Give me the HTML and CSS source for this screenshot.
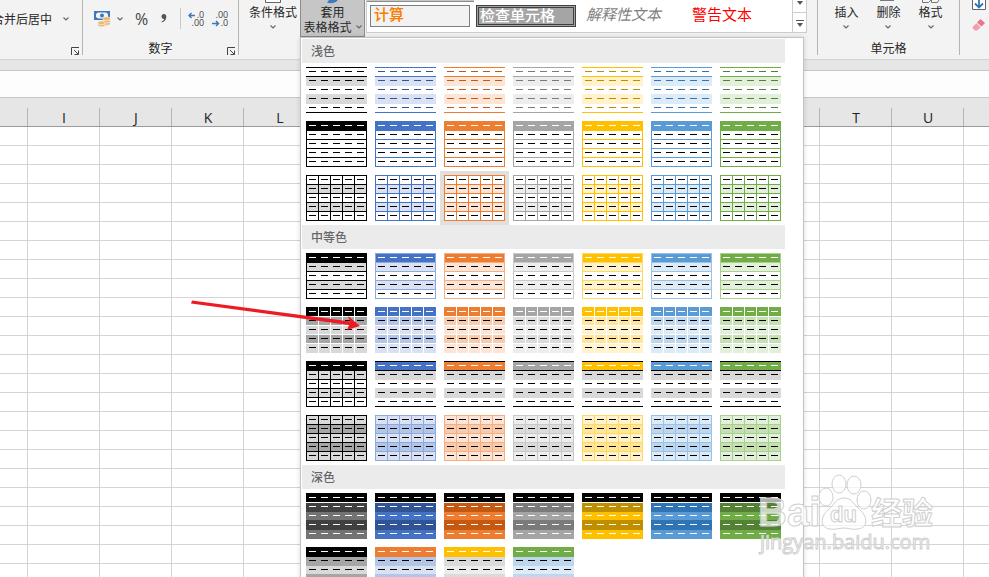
FILE: index.html
```html
<!DOCTYPE html>
<html lang="zh-CN">
<head>
<meta charset="utf-8">
<title>Excel</title>
<link rel="stylesheet" href="styles.css">
</head>
<body>
<svg class="defs" aria-hidden="true">
  <symbol id="chev" viewBox="0 0 6 4"><path d="M.5.5 3 3 5.5.5" fill="none" stroke="#666" stroke-width="1.1"/></symbol>
  <symbol id="launch" viewBox="0 0 8 8"><path d="M.5 8V.5H8M3 3l4 4M7.500 3.500v4h-4" fill="none" stroke="#444"/></symbol>
</svg>
<header class="ribbon">
  <section class="group group-align">
    <div class="tools">
      <button class="tool merge">合并后居中<svg class="chev"><use href="#chev"/></svg></button>
    </div>
    <div class="caption"><button class="launcher" aria-label="对齐设置"><svg><use href="#launch"/></svg></button></div>
  </section>
  <section class="group group-number">
    <div class="tools">
      <button class="tool money" aria-label="会计数字格式">
        <svg width="17" height="17" viewBox="0 0 17 17"><path fill="#3d7ab8" d="M0 1h16v9H0z"/><path fill="#f3f3f3" d="M2 4l2-1.500h8L14 4v3l-2 1.500H4L2 7z"/><circle cx="8" cy="5.500" r="2" fill="#3d7ab8"/><g fill="#eab76c" stroke="#f3f3f3" stroke-width=".7"><ellipse cx="12.500" cy="13.500" rx="3.800" ry="1.900"/><ellipse cx="12.500" cy="11.200" rx="3.800" ry="1.900"/><ellipse cx="12.500" cy="8.700" rx="3.800" ry="1.900"/><ellipse cx="7.500" cy="15" rx="3.800" ry="1.800"/><ellipse cx="7.500" cy="12.800" rx="3.800" ry="1.800"/></g></svg>
        <svg class="chev"><use href="#chev"/></svg>
      </button>
      <button class="tool percent">%</button>
      <button class="tool comma" aria-label="千位分隔样式"><svg width="6" height="9" viewBox="0 0 6 9"><path fill="#555" d="M2.800 0C4.600 0 5.600 1.300 5.300 3.300 5 6 3.200 8 .8 8.600L.5 7.700C2 7 3 6 3.200 5 1.700 5.200.5 4.200.5 2.600.5 1 1.500 0 2.800 0z"/></svg></button>
      <span class="sep"></span>
      <button class="tool decimals" aria-label="增加小数位数"><svg width="16" height="16" viewBox="0 0 16 16"><path d="M1 4.500h6M3.500 2 1 4.500 3.500 7" fill="none" stroke="#3d7ab8" stroke-width="1.500"/></svg><span>.0</span><span>.00</span></button>
      <button class="tool decimals" aria-label="减少小数位数"><svg width="16" height="16" viewBox="0 0 16 16"><path d="M0 12.500h6.500M4 10l2.500 2.500L4 15" fill="none" stroke="#3d7ab8" stroke-width="1.500"/></svg><span>.00</span><span>.0</span></button>
    </div>
    <div class="caption">数字<button class="launcher" aria-label="数字设置"><svg><use href="#launch"/></svg></button></div>
  </section>
  <section class="group group-styles">
    <button class="big conditional"><svg class="top" width="16" height="4" viewBox="0 0 16 4"><path d="M.5 0v2.500h15V0" fill="#fff" stroke="#666"/></svg><span>条件格式</span><svg class="chev"><use href="#chev"/></svg></button>
    <div class="menu-anchor">
      <button class="big format-table" aria-expanded="true"><svg class="top" width="16" height="4" viewBox="0 0 16 4"><path d="M4 0h9C11 3 6 4 2 2.500z" fill="#3d7ab8"/></svg><span>套用</span><span>表格格式<svg class="chev"><use href="#chev"/></svg></span></button>
      <div class="gallery" id="gallery"></div>
    </div>
    <div class="styles">
      <div class="style-list">
        <span class="style-edge"></span>
        <button class="style calc">计算</button>
        <button class="style check">检查单元格</button>
        <button class="style explain">解释性文本</button>
        <button class="style warn">警告文本</button>
      </div>
      <div class="style-scroll">
        <button aria-label="向下滚动"><svg width="6" height="4" viewBox="0 0 6 4"><path d="M0 0h6L3 4z" fill="#555"/></svg></button>
        <button aria-label="其他样式"><svg width="8" height="7" viewBox="0 0 8 7"><path d="M0 0h8v1H0zM1 3h6L4 7z" fill="#555"/></svg></button>
      </div>
    </div>
  </section>
  <section class="group group-cells">
    <div class="tools">
      <button class="big"><svg class="top" width="16" height="4"></svg><span>插入</span><svg class="chev"><use href="#chev"/></svg></button>
      <button class="big"><svg class="top" width="16" height="4" viewBox="0 0 16 4"><path d="M0 0h14v1H0z" fill="#777"/></svg><span>删除</span><svg class="chev"><use href="#chev"/></svg></button>
      <button class="big"><svg class="top" width="18" height="4" viewBox="0 0 18 4"><path d="M.5 0v2.500h6L9 0M9.500 0v2.500h6L17 0" fill="none" stroke="#777"/></svg><span>格式</span><svg class="chev"><use href="#chev"/></svg></button>
    </div>
    <div class="caption">单元格</div>
  </section>
  <section class="group-edit">
    <button aria-label="填充"><svg width="14" height="10" viewBox="0 0 14 10"><path d="M.5 0v9.500h13V0" fill="#fff" stroke="#666"/><path d="M7 0v7M3 3.500 7 7.500l4-4" fill="none" stroke="#2f75b5" stroke-width="1.800"/></svg></button>
    <button aria-label="清除"><svg width="14" height="14" viewBox="0 0 14 14"><path d="M8.500 1 13 5 9.500 8.500 5 4.500z" fill="#e87588"/><path d="M4.400 5.200 8.800 9.200 5 12.500H3L.8 10.300V8.800z" fill="#f0a0ac"/></svg></button>
  </section>
</header>
<div class="formula"><input aria-label="编辑栏"></div>
<main class="sheet">
  <table>
    <thead><tr><th></th><th>I</th><th>J</th><th>K</th><th>L</th><th></th><th></th><th></th><th></th><th></th><th></th><th></th><th>T</th><th>U</th><th></th></tr></thead>
    <tbody id="rows"></tbody>
  </table>
</main>
<svg class="arrow" width="172" height="34" viewBox="0 0 172 34" aria-hidden="true"><path d="M1 3.500 2 .5 160 21.500 158 16 170 26 157 30 159 25z" fill="#ed1c24"/></svg>
<svg class="watermark" width="190" height="90" viewBox="0 0 190 90" aria-hidden="true">
  <g class="mark">
    <text class="bai" x="4" y="57">Bai</text>
    <ellipse cx="72" cy="28" rx="7" ry="9"/><ellipse cx="85" cy="15" rx="7" ry="9"/><ellipse cx="100" cy="16" rx="7" ry="9"/><ellipse cx="110" cy="31" rx="7" ry="9"/>
    <path d="M90 29c8 0 10 7 16 12 8 7 8 18-2 19-6 1-10-1-14-1s-9 2-14 1c-10-1-10-12-2-19 6-5 8-12 16-12z"/>
    <text class="du" x="76" y="53">du</text>
    <text class="jy" x="117" y="55">经验</text>
    <text class="url" x="6" y="80">jingyan.baidu.com</text>
  </g>
</svg>
<script src="app.js"></script>
</body>
</html>
```
FILE: styles.css
```css
* { box-sizing: border-box; }
body {
  margin: 0;
  height: 100vh;
  overflow: hidden;
  position: relative;
  display: flex;
  flex-direction: column;
  background: #fff;
  color: #262626;
  font: 12px/16px "Noto Sans CJK SC", sans-serif;
}
button { margin: 0; padding: 0; border: 0; background: none; color: inherit; font: inherit; white-space: nowrap; }
svg { display: block; flex: none; }
.defs { position: absolute; width: 0; height: 0; }
.chev { width: 6px; height: 4px; }

/* Ribbon */
.ribbon { display: flex; flex: none; background: #f3f3f3; border-bottom: 1px solid #d2d2d2; padding-bottom: 4px; }
.group { display: flex; flex-direction: column; flex: none; border-right: 1px solid #b4b4b4; }
.tools { display: flex; align-items: center; height: 37px; }
.tool { display: flex; align-items: center; }
.caption { position: relative; height: 18px; line-height: 22px; text-align: center; }
.launcher { position: absolute; right: 3px; bottom: 0; }
.launcher svg { width: 8px; height: 8px; }
.group-align { width: 83px; overflow: hidden; }
.merge { margin-left: -8px; gap: 11px; }
.group-number { width: 156px; }
.group-number .tools { padding-left: 11px; }
.money { gap: 6px; }
.percent { margin-left: 12px; font: 16px/20px "Open Sans", sans-serif; color: #444; }
.comma { margin-left: 13px; }
.sep { width: 1px; height: 21px; margin: 0 7px 0 13px; background: #c8c8c8; }
.decimals { position: relative; width: 16px; flex-direction: column; align-items: flex-end; margin-right: 8px; font: 9px/8px "Open Sans", sans-serif; color: #444; }
.decimals svg { position: absolute; top: 0; left: 0; }
.group-styles { flex-direction: row; align-items: flex-start; width: 579px; padding-left: 10px; }
.big { display: flex; flex-direction: column; align-items: center; }
.big > .chev { margin-top: 5px; }
.conditional { width: 48px; }
.menu-anchor { position: relative; margin-left: 3px; }
.format-table { width: 65px; height: 37px; line-height: 15px; background: #c6c6c6; border: 1px solid #8c8c8c; border-top: 0; }
.format-table span { display: flex; align-items: center; gap: 4px; }
.styles { display: flex; height: 33px; flex: 1; margin: 0 10px 0 1px; background: #fff; border: 1px solid #cdcdcd; border-top: 0; }
.style-list { position: relative; flex: 1; display: flex; align-items: flex-start; padding: 5px 0 0 3px; gap: 6px; }
.style-edge { position: absolute; top: 0; left: 0; width: 107px; height: 2px; background: #c6c6c6; border-bottom: 1px solid #8c8c8c; }
.style { width: 100px; height: 22px; padding: 0 0 4px 3px; text-align: left; font-size: 15px; line-height: 16px; border: 1px solid transparent; }
.calc { color: #fa7d00; background: #f2f2f2; border-color: #7f7f7f; font-weight: 500; }
.check { padding: 0 0 3px 1px; color: #fff; background: #a5a5a5; border: 3px double #3f3f3f; font-weight: 500; line-height: 13px; }
.explain { color: #7f7f7f; font-style: italic; }
.warn { color: #f00; }
.style-scroll { display: flex; flex-direction: column; width: 14px; border-left: 1px solid #cdcdcd; }
.style-scroll button { display: flex; justify-content: center; align-items: center; height: 12px; padding-bottom: 6px; }
.style-scroll button + button { height: 20px; padding: 2px 0 0; border-top: 1px solid #cdcdcd; }
.group-cells { width: 142px; }
.group-cells .tools { align-items: flex-start; justify-content: center; gap: 18px; }
.group-edit { flex: 1; display: flex; flex-direction: column; gap: 8px; padding-left: 12px; overflow: hidden; }

/* Formula bar and sheet */
.formula { flex: none; padding: 10px 0 0; background: #e6e6e6; }
.formula input { display: block; width: 100%; height: 28px; border: 1px solid #c6c6c6; border-width: 1px 0; background: #fdfdfd; }
.sheet { flex: 1; overflow: hidden; }
table { width: 1080px; margin-left: -44px; table-layout: fixed; border-collapse: separate; border-spacing: 0; }
th { height: 29px; padding: 12px 0 0; border-bottom: 1px solid #9b9b9b; background: linear-gradient(#b4b4b4, #b4b4b4) right bottom / 1px 18px no-repeat #e6e6e6; font: 14px/16px "Open Sans", sans-serif; color: #222; }
td { height: 19px; padding: 0; border: solid #d4d4d4; border-width: 0 1px 1px 0; }

/* Table style gallery */
.gallery { position: absolute; z-index: 2; top: 100%; left: 0; width: 504px; height: 560px; padding: 1px; background: #fff; border: 1px solid #c3c3c3; box-shadow: 0 0 5px rgba(0, 0, 0, .15); }
.gallery h2 { width: 483px; height: 24px; margin: 0; padding-left: 9px; background: #ebebeb; color: #666; font-size: 12px; line-height: 23px; font-weight: 500; }
.thumbs { display: grid; grid-template-columns: repeat(7, 69px); }
.thumb { padding: 4px; }
.thumb svg { width: 61px; height: 46px; background: #fff; shape-rendering: crispEdges; }
.thumb.active { background: #e0e0e0; }

.arrow { position: absolute; z-index: 3; left: 190px; top: 300px; pointer-events: none; }
.watermark { position: absolute; z-index: 3; left: 754px; top: 469px; pointer-events: none; }
.mark { fill: #fff; fill-opacity: .7; stroke: #cfcfcf; stroke-width: 1; }
.bai { font: 700 40px "Liberation Sans", sans-serif; }
.du { font: 700 22px "Liberation Sans", sans-serif; }
.jy { font: 700 31px "Noto Sans CJK SC", sans-serif; }
.url { font: 20px "Open Sans", sans-serif; }
```
FILE: app.js
```js
// Theme palette: main, light, mid, tint, dark
const themes = [
  { name: '黑色', main: '#000', light: '#d9d9d9', mid: '#a6a6a6', tint: '#000', dark: '#000', black: true },
  { name: '蓝色', main: '#4472c4', light: '#d9e1f2', mid: '#b4c6e7', tint: '#8ea9db', dark: '#305496' },
  { name: '橙色', main: '#ed7d31', light: '#fce4d6', mid: '#f8cbad', tint: '#f4b084', dark: '#c65911' },
  { name: '灰色', main: '#a5a5a5', light: '#ededed', mid: '#dbdbdb', tint: '#c9c9c9', dark: '#7b7b7b' },
  { name: '金色', main: '#ffc000', light: '#fff2cc', mid: '#ffe699', tint: '#ffd966', dark: '#bf8f00' },
  { name: '浅蓝', main: '#5b9bd5', light: '#ddebf7', mid: '#bdd7ee', tint: '#9bc2e6', dark: '#2f75b5' },
  { name: '绿色', main: '#70ad47', light: '#e2efda', mid: '#c6e0b4', tint: '#a9d08e', dark: '#548235' }
];

const rect = (x, y, w, h, fill) => `<rect x="${x}" y="${y}" width="${w}" height="${h}" fill="${fill}"/>`;
const hline = (y, c) => rect(0, y, 61, 1, c);
const hlines = (ys, c) => ys.map(y => hline(y, c)).join('');
const vlines = (xs, c) => xs.map(x => rect(x, 0, 1, 46, c)).join('');
const band = (row, c) => rect(0, [0, 10, 19, 27, 37][row], 61, [10, 9, 8, 10, 9][row], c);
const bands = colors => colors.map((c, i) => c ? band(i, c) : '').join('');
const allY = [0, 9, 18, 27, 36, 45];
const allX = [0, 12, 24, 36, 48, 60];

// Each row of a thumbnail holds five short dashes standing in for cell text
function dashes(head, body) {
  let out = '';
  for (let r = 0; r < 5; r++)
    for (let c = 0; c < 5; c++) out += rect(3 + 12 * c, 4 + 9 * r, 7, 1, r ? body : head);
  return out;
}

const styles = {
  lines: t => bands([0, t.light, 0, t.light, 0]) + hlines([0, 9, 45], t.main) + dashes(t.dark, t.dark),
  boxed: t => band(0, t.main) + hlines(allY, t.main) + vlines([0, 60], t.main) + dashes('#fff', '#000'),
  grid: t => bands([0, t.light, 0, t.light, 0]) + hlines(allY, t.main) + vlines(allX, t.main) + dashes('#000', '#000'),
  banded: t => bands([t.main, t.light, 0, t.light, 0]) + hlines(allY, t.tint) + vlines([0, 60], t.tint) + dashes('#fff', '#000'),
  tiles: t => bands([t.main, t.mid, t.light, t.mid, t.light]) + hlines([9, 18, 27, 36], '#fff') + vlines([12, 24, 36, 48], '#fff') + dashes('#fff', '#000'),
  header: t => bands([t.main, '#d9d9d9', 0, '#d9d9d9', 0])
    + (t.black ? hlines(allY, '#000') + vlines(allX, '#000') : hlines([0, 9, 45], '#000')) + dashes('#fff', '#000'),
  filled: t => bands([t.light, t.mid, t.light, t.mid, t.light]) + hlines(allY, t.tint) + vlines(allX, t.tint) + dashes('#000', '#000'),
  dark: t => {
    const a = t.black ? '#404040' : t.dark, b = t.black ? '#737373' : t.main;
    return bands(['#000', a, b, a, b]) + hline(9, '#fff') + dashes('#fff', '#fff');
  },
  duo: t => bands([t.head || t.main, t.mid, t.light, t.mid, t.light]) + dashes('#fff', '#000')
};

const duos = [themes[0], { ...themes[1], head: '#ed7d31' }, { ...themes[3], head: '#ffc000' }, { ...themes[5], head: '#70ad47' }];
const sections = [
  ['浅色', [['lines', themes], ['boxed', themes], ['grid', themes]]],
  ['中等色', [['banded', themes], ['tiles', themes], ['header', themes], ['filled', themes]]],
  ['深色', [['dark', themes], ['duo', duos]]]
];

document.getElementById('gallery').innerHTML = sections.map(([title, rows]) =>
  `<h2>${title}</h2><div class="thumbs">` + rows.map(([kind, list]) => list.map(t =>
    `<button class="thumb${kind === 'grid' && t.name === '橙色' ? ' active' : ''}" aria-label="${t.name}"><svg viewBox="0 0 61 46">${styles[kind](t)}</svg></button>`
  ).join('')).join('') + '</div>').join('');

document.getElementById('rows').innerHTML = ('<tr>' + '<td></td>'.repeat(15) + '</tr>').repeat(24);
```
